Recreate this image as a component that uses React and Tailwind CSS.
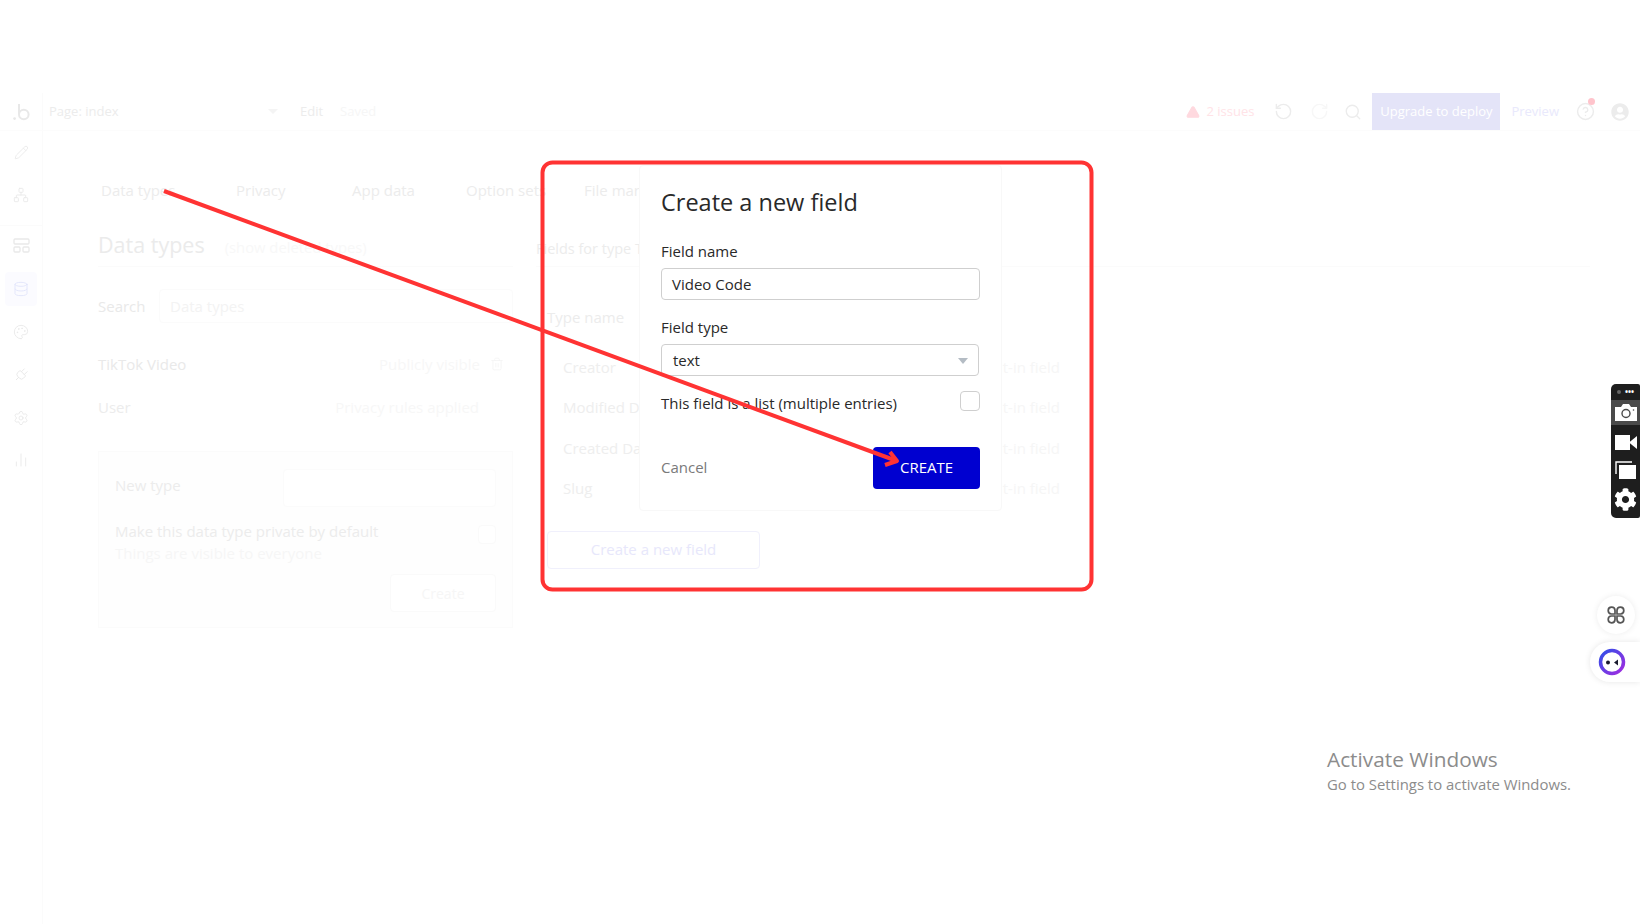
import React from "react";
import {
  Pencil,
  Network,
  Database,
  Palette,
  Plug,
  Settings,
  BarChart2,
  Trash2,
  TriangleAlert,
  RotateCcw,
  RotateCw,
  Search,
  CircleHelp,
} from "lucide-react";
import { FaCog, FaUserCircle } from "react-icons/fa";

const fieldRows = [
  { name: "Creator", top: "mt-[27px]" },
  { name: "Modified Date", top: "mt-[20px]" },
  { name: "Created Date", top: "mt-[21px]" },
  { name: "Slug", top: "mt-[20px]" },
];

const LayoutIcon = () => (
  <svg width="17" height="17" viewBox="0 0 17 17" fill="none" stroke="#e9e9e9" strokeWidth="1.3">
    <rect x="1" y="2" width="15" height="5" rx="1" />
    <rect x="1" y="10" width="6" height="5" rx="1" />
    <rect x="10" y="10" width="6" height="5" rx="1" />
  </svg>
);

const Logo = () => (
  <svg width="17" height="18" viewBox="0 0 17 18" fill="none">
    <circle cx="1.6" cy="15.6" r="1.4" fill="#e8e8e8" />
    <path d="M6 1 V11.5" stroke="#e8e8e8" strokeWidth="2" />
    <circle cx="10.8" cy="11.5" r="4.8" stroke="#e8e8e8" strokeWidth="2" />
  </svg>
);

const SideBar = () => (
  <div className="w-[43px] h-[793px] shrink-0 border-r border-[#fbfbfb] flex flex-col items-center text-[#e9e9e9]">
    <Pencil size={15} strokeWidth={1.4} className="mt-[14px]" />
    <Network size={16} strokeWidth={1.4} className="mt-[27px]" />
    <div className="w-full border-t border-[#fbfbfb] mt-[22px]" />
    <div className="mt-[11px]">
      <LayoutIcon />
    </div>
    <div className="w-[32px] h-[34px] mt-[18px] rounded bg-[#fbfbff] flex items-center justify-center">
      <Database size={16} strokeWidth={1.4} className="text-[#e2e5fb]" />
    </div>
    <Palette size={16} strokeWidth={1.4} className="mt-[18px]" />
    <Plug size={16} strokeWidth={1.4} className="mt-[27px] rotate-45" />
    <Settings size={16} strokeWidth={1.4} className="mt-[27px]" />
    <BarChart2 size={16} strokeWidth={1.4} className="mt-[26px]" />
  </div>
);

const TopBar = () => (
  <div className="h-[38px] flex items-center border-b border-[#fcfcfc] text-[13px]">
    <div className="w-[43px] h-full border-r border-[#fbfbfb] flex items-center justify-center">
      <Logo />
    </div>
    <span className="ml-[6px] w-[218px] text-[#ececec]">Page: index</span>
    <svg width="12" height="7" viewBox="0 0 12 7">
      <path d="M1 1 L6 6 L11 1 Z" fill="#f4f4f4" />
    </svg>
    <span className="ml-[21px] text-[#ececec]">Edit</span>
    <span className="ml-[17px] text-[#f6f6f6]">Saved</span>
    <div className="ml-auto flex items-center h-full">
      <TriangleAlert size={14} fill="#ffd9df" className="text-[#ffd9df]" />
      <span className="ml-[6px] text-[#ffe3e7]">2 issues</span>
      <RotateCcw size={19} strokeWidth={1.8} className="ml-[20px] text-[#ececec]" />
      <RotateCw size={19} strokeWidth={1.8} className="ml-[17px] text-[#f7f7f7]" />
      <Search size={18} strokeWidth={1.8} className="ml-[15px] text-[#ececec]" />
      <div className="ml-[10px] w-[128px] h-full bg-[#e4e4f8] text-white flex items-center justify-center">
        Upgrade to deploy
      </div>
      <span className="ml-[11px] text-[#e9e9fc]">Preview</span>
      <div className="relative ml-[17px]">
        <CircleHelp size={19} strokeWidth={1.8} className="text-[#ececec]" />
        <span className="absolute -top-[4px] right-[0px] w-[7px] h-[7px] rounded-full bg-[#ffc4cc]" />
      </div>
      <FaUserCircle size={18} className="ml-[16px] mr-[11px] text-[#ececec]" />
    </div>
  </div>
);

const DataTypesColumn = () => (
  <div className="w-[415px] shrink-0">
    <div className="flex items-baseline h-[38px] border-b border-[#fbfbfb]">
      <span className="text-[21.5px] text-[#ebebeb]">Data types</span>
      <span className="ml-[20px] text-[14.8px] text-[#f8f8f8]">(show deleted types)</span>
    </div>
    <div className="flex items-center mt-[22px] h-[34px]">
      <span className="w-[61px] text-[15px] text-[#e9e9e9]">Search</span>
      <div className="flex-1 h-full rounded border border-[#fbfbfb] pl-[10px] flex items-center text-[15px] text-[#f3f3f3]">
        Data types
      </div>
    </div>
    <div className="flex items-center justify-between mt-[29px] h-[24px]">
      <span className="text-[15px] text-[#e9e9e9]">TikTok Video</span>
      <div className="flex items-center">
        <span className="text-[15px] text-[#f7f7f7]">Publicly visible</span>
        <Trash2 size={14} strokeWidth={1.4} className="ml-[10px] mr-[9px] text-[#f4f4f4]" />
      </div>
    </div>
    <div className="flex items-center justify-between mt-[19px] h-[24px]">
      <span className="text-[15px] text-[#ececec]">User</span>
      <span className="text-[15px] text-[#f7f7f7] mr-[34px]">Privacy rules applied</span>
    </div>
    <div className="mt-[32px] h-[177px] border border-[#fbfbfb] bg-[#fefefe] px-[16px] pt-[17px]">
      <div className="flex items-center justify-between">
        <span className="text-[15px] text-[#ececec] mb-[6px]">New type</span>
        <div className="w-[213px] h-[38px] rounded border border-[#fbfbfb] bg-white" />
      </div>
      <div className="flex justify-between mt-[14px]">
        <div>
          <div className="text-[15px] leading-[21px] text-[#ececec]">Make this data type private by default</div>
          <div className="text-[15px] leading-[22px] text-[#f6f6f6]">Things are visible to everyone</div>
        </div>
        <div className="w-[18px] h-[19px] rounded border border-[#fafafa] bg-white mt-[4px]" />
      </div>
      <div className="flex justify-end mt-[10px]">
        <div className="w-[106px] h-[38px] rounded border border-[#fafafa] bg-white flex items-center justify-center text-[14px] text-[#f6f6f6]">
          Create
        </div>
      </div>
    </div>
  </div>
);

const FieldsColumn = () => (
  <div className="ml-[23px] flex-1 pr-[50px]">
    <div className="h-[38px] border-b border-[#fbfbfb] text-[14.5px] text-[#ececec] pt-[9px]">
      Fields for type TikTok Video
    </div>
    <div className="ml-[11px] mt-[39px] h-[24px] text-[15px] text-[#ececec]">Type name</div>
    {fieldRows.map((row) => (
      <div key={row.name} className={`${row.top} ml-[27px] w-[497px] h-[20px] flex justify-between text-[15px] leading-[20px]`}>
        <span className="text-[#eeeeee]">{row.name}</span>
        <span className="text-[#f6f6f6]">Built-in field</span>
      </div>
    ))}
    <div className="ml-[11px] mt-[33px] w-[213px] h-[38px] pb-[2px] rounded border border-[#f0f0fc] text-[15px] text-[#e7e7fb] flex items-center justify-center">
      Create a new field
    </div>
  </div>
);

const NewFieldModal = () => (
  <div className="absolute left-[639px] top-[165px] w-[363px] h-[346px] bg-white border border-[#f8f8f8] rounded pl-[21px] pr-[21px] pt-[20px] text-[#292929]">
    <h2 className="text-[23.5px] leading-[32px]">Create a new field</h2>
    <div className="mt-[22px] text-[15px] leading-[22px]">Field name</div>
    <div className="mt-[6px] w-[319px] h-[32px] rounded border border-[#cfcfcf] pl-[10px] pt-[1px] flex items-center text-[15px]">
      Video Code
    </div>
    <div className="mt-[16px] text-[15px] leading-[22px]">Field type</div>
    <div className="mt-[6px] w-[318px] h-[32px] rounded border border-[#cfcfcf] pl-[11px] pr-[10px] pt-[1px] flex items-center justify-between text-[15px]">
      text
      <span className="w-0 h-0 border-l-[5px] border-r-[5px] border-t-[6px] border-l-transparent border-r-transparent border-t-[#b4bcc4]" />
    </div>
    <div className="flex justify-between mt-[15px] w-[319px]">
      <span className="text-[15px] leading-[24px]">This field is a list (multiple entries)</span>
      <span className="w-[20px] h-[20px] rounded border border-[#cfcfcf]" />
    </div>
    <div className="flex items-center justify-between mt-[32px] w-[319px]">
      <span className="text-[15px] text-[#7a7a7a] mb-[2px]">Cancel</span>
      <div className="w-[107px] h-[42px] pb-[2px] rounded-sm bg-[#0000d0] text-white text-[15px] flex items-center justify-center">
        CREATE
      </div>
    </div>
  </div>
);

const Annotation = () => (
  <svg className="absolute inset-0 pointer-events-none" width="1640" height="924" viewBox="0 0 1640 924" fill="none">
    <rect x="542.5" y="162.5" width="549" height="427" rx="10" stroke="#ff3333" strokeWidth="4" />
    <path d="M164 191 L897 461" stroke="#ff3333" strokeWidth="4" />
    <path d="M890 452 L897 461 L885 465" stroke="#ff3333" strokeWidth="4" strokeLinejoin="round" />
  </svg>
);

const ScreenshotBar = () => (
  <div className="absolute right-0 top-[384px] w-[29px] h-[134px] bg-[#1e1e1e] rounded-l-[5px] rounded-r-[2px] flex flex-col items-center text-white">
    <div className="h-[16px] w-full flex items-center justify-between px-[6px]">
      <span className="w-[4px] h-[4px] rounded-full bg-[#666666]" />
      <span className="text-[8px] leading-none font-bold">•••</span>
    </div>
    <div className="w-full h-[25px] bg-[#4a4a4a] flex items-center justify-center">
      <svg width="22" height="17" viewBox="0 0 22 17">
        <path d="M0 3 H6 L8 0 H14 L16 3 H22 V17 H0 Z" fill="white" />
        <circle cx="11" cy="9.5" r="4" fill="none" stroke="#4a4a4a" strokeWidth="1.4" />
        <circle cx="18.5" cy="6" r="0.8" fill="#4a4a4a" />
      </svg>
    </div>
    <svg width="22" height="15" viewBox="0 0 22 15" className="mt-[10px]">
      <rect x="0" y="0" width="15" height="15" fill="white" />
      <path d="M14 7.5 L22 1 V14 Z" fill="white" />
    </svg>
    <svg width="22" height="20" viewBox="0 0 22 20" fill="none" className="mt-[10px]">
      <path d="M1 14 V2 H17" stroke="white" strokeWidth="1.4" />
      <rect x="4" y="5" width="17" height="14" fill="white" />
    </svg>
    <FaCog size={23} className="mt-[8px]" />
  </div>
);

const ChatWidgets = () => (
  <div className="absolute right-0 top-[596px] flex flex-col items-end">
    <div className="w-[38px] h-[38px] mr-[5px] rounded-full bg-white shadow-[0_0_6px_rgba(0,0,0,0.08)] flex items-center justify-center">
      <svg width="18" height="18" viewBox="0 0 18 18" fill="none" stroke="#555555" strokeWidth="1.7">
        <path d="M8 8 H4.4 A3.4 3.4 0 1 1 8 4.4 Z" />
        <path d="M10 8 H13.6 A3.4 3.4 0 1 0 10 4.4 Z" />
        <path d="M8 10 H4.4 A3.4 3.4 0 1 0 8 13.6 Z" />
        <path d="M10 10 H13.6 A3.4 3.4 0 1 1 10 13.6 Z" />
      </svg>
    </div>
    <div className="mt-[8px] w-[50px] h-[40px] rounded-l-full bg-white shadow-[0_0_6px_rgba(0,0,0,0.1)] pl-[8px] flex items-center">
      <svg width="28" height="28" viewBox="0 0 28 28" fill="none">
        <defs>
          <linearGradient id="ring" x1="0" y1="0" x2="1" y2="1">
            <stop offset="0" stopColor="#2f4fe8" />
            <stop offset="1" stopColor="#a32be0" />
          </linearGradient>
        </defs>
        <circle cx="14" cy="14" r="11.5" stroke="url(#ring)" strokeWidth="3.5" />
        <circle cx="10" cy="14.5" r="2" fill="#1a1a2e" />
        <path d="M20 11.5 L16 14.5 L20 17.5 Z" fill="#1a1a2e" />
      </svg>
    </div>
  </div>
);

const Watermark = () => (
  <div className="absolute left-[1327px] top-[745px] text-[#8c8c8c]">
    <div className="text-[20.8px] leading-[28px]">Activate Windows</div>
    <div className="text-[14.9px] leading-[20px] mt-[1px]">Go to Settings to activate Windows.</div>
  </div>
);

const tabs = [
  { label: "Data types", cls: "ml-[58px] w-[135px]" },
  { label: "Privacy", cls: "w-[116px]" },
  { label: "App data", cls: "w-[114px]" },
  { label: "Option sets", cls: "w-[118px]" },
  { label: "File manager", cls: "" },
];

const App = () => {
  return (
    <div className="relative w-[1640px] h-[924px] overflow-hidden bg-white pt-[93px] font-['Open_Sans',sans-serif]">
      <TopBar />
      <div className="flex">
        <SideBar />
        <div className="flex-1">
          <div className="flex mt-[48px] h-[26px] text-[15px] text-[#ececec]">
            {tabs.map((tab) => (
              <span key={tab.label} className={tab.cls}>
                {tab.label}
              </span>
            ))}
          </div>
          <div className="flex ml-[55px] mt-[24px]">
            <DataTypesColumn />
            <FieldsColumn />
          </div>
        </div>
      </div>
      <NewFieldModal />
      <Annotation />
      <ScreenshotBar />
      <ChatWidgets />
      <Watermark />
    </div>
  );
};

export default App;
